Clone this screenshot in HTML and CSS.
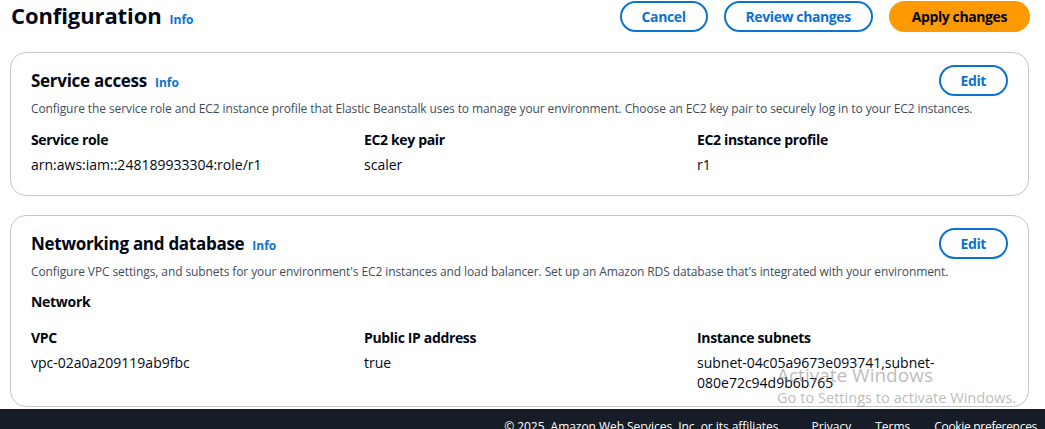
FILE: index.html
```html
<!DOCTYPE html>
<html lang="en">
<head>
<meta charset="utf-8">
<title>Configuration</title>
<link rel="stylesheet" href="styles.css">
</head>
<body>
<div class="page">
  <header class="top">
    <div class="title-wrap">
      <h1 class="title">Configuration</h1>
      <a class="info">Info</a>
    </div>
    <div class="actions">
      <button class="btn">Cancel</button>
      <button class="btn">Review changes</button>
      <button class="btn primary">Apply changes</button>
    </div>
  </header>

  <section class="card">
    <div class="card-head">
      <div class="card-title-row"><h2 class="card-title">Service access</h2><a class="info">Info</a></div>
      <button class="btn edit">Edit</button>
    </div>
    <p class="desc">Configure the service role and EC2 instance profile that Elastic Beanstalk uses to manage your environment. Choose an EC2 key pair to securely log in to your EC2 instances.</p>
    <div class="grid">
      <div class="field"><div class="label">Service role</div><div class="value">arn:aws:iam::248189933304:role/r1</div></div>
      <div class="field"><div class="label">EC2 key pair</div><div class="value">scaler</div></div>
      <div class="field"><div class="label">EC2 instance profile</div><div class="value">r1</div></div>
    </div>
  </section>

  <section class="card card-last">
    <div class="card-head">
      <div class="card-title-row"><h2 class="card-title">Networking and database</h2><a class="info">Info</a></div>
      <button class="btn edit">Edit</button>
    </div>
    <p class="desc">Configure VPC settings, and subnets for your environment's EC2 instances and load balancer. Set up an Amazon RDS database that's integrated with your environment.</p>
    <h3 class="sub">Network</h3>
    <div class="grid grid-net">
      <div class="field"><div class="label">VPC</div><div class="value">vpc-02a0a209119ab9fbc</div></div>
      <div class="field"><div class="label">Public IP address</div><div class="value">true</div></div>
      <div class="field"><div class="label">Instance subnets</div><div class="value">subnet-04c05a9673e093741,subnet-080e72c94d9b6b765</div></div>
    </div>
  </section>
</div>

<footer class="footer">
  <span class="copy">© 2025, Amazon Web Services, Inc. or its affiliates.</span>
  <a class="flink privacy">Privacy</a>
  <a class="flink">Terms</a>
  <a class="flink cookie">Cookie preferences</a>
</footer>

<div class="watermark">
  <div class="wm1">Activate Windows</div>
  <div class="wm2">Go to Settings to activate Windows.</div>
</div>
</body>
</html>
```

FILE: styles.css
```css
* { box-sizing: border-box; }
html, body { margin: 0; padding: 0; }
body {
  font-family: "Open Sans", "Noto Sans", sans-serif;
  color: #000716;
  background: #fff;
  width: 1045px;
  height: 429px;
  overflow: hidden;
  position: relative;
}
.page {
  padding: 0 16px 0 10px;
}
.top {
  display: flex;
  justify-content: space-between;
  align-items: flex-start;
  height: 52px;
}
.title-wrap {
  display: flex;
  align-items: baseline;
  gap: 8px;
  padding-left: 1px;
}
.title {
  margin: 0;
  font-size: 22px;
  font-weight: 700;
  line-height: 30px;
  letter-spacing: -0.1px;
}
.info {
  color: #0972d3;
  font-size: 12px;
  font-weight: 700;
}
.actions {
  display: flex;
  gap: 16px;
  margin-right: -1px;
}
.btn {
  font-family: inherit;
  font-size: 14px;
  font-weight: 700;
  letter-spacing: -0.4px;
  color: #0972d3;
  background: #fff;
  border: 2px solid #0972d3;
  border-radius: 20px;
  height: 31px;
  padding: 0 20px;
  margin-top: 1px;
  cursor: pointer;
}
.primary {
  background: #ff9900;
  border-color: #ff9900;
  color: #000716;
  padding: 0 21px;
}
.card {
  border: 1px solid #c6c6cd;
  border-radius: 16px;
  padding: 12px 20px 20px 20px;
  margin-bottom: 19px;
}
.card-last {
  padding-bottom: 13px;
}
.card-head {
  display: flex;
  justify-content: space-between;
  align-items: center;
  height: 31px;
}
.card-title-row {
  display: flex;
  align-items: baseline;
  gap: 8px;
}
.card-title {
  margin: 0;
  font-size: 17px;
  font-weight: 700;
  line-height: 24px;
  letter-spacing: -0.28px;
}
.desc {
  margin: 5px 0 0 0;
  font-size: 12px;
  line-height: 16px;
  color: #414d5c;
  letter-spacing: -0.1px;
  white-space: nowrap;
}
.edit {
  padding: 0 20px;
  margin: 0;
  flex: none;
}
.grid {
  display: grid;
  grid-template-columns: 333px 333px 1fr;
  margin-top: 13px;
}
.sub {
  margin: 12px 0 0 0;
  font-size: 14px;
  font-weight: 700;
  line-height: 20px;
  letter-spacing: -0.3px;
}
.grid-net { margin-top: 16px; }
.label {
  font-size: 14px;
  font-weight: 700;
  line-height: 20px;
  letter-spacing: -0.35px;
}
.value {
  font-size: 14px;
  line-height: 20px;
  margin-top: 5px;
}
.footer {
  position: absolute;
  left: 0;
  right: 0;
  top: 409px;
  height: 20px;
  background: #161d26;
  color: #fff;
  font-size: 12px;
  display: flex;
  justify-content: flex-end;
  align-items: flex-end;
  padding-right: 8px;
  line-height: 14px;
}
.copy, .flink { position: relative; top: 5px; }
.copy { letter-spacing: -0.05px; }
.flink { margin-left: 24px; }
.privacy { margin-left: 30px; }
.cookie { letter-spacing: -0.3px; }
.watermark {
  position: absolute;
  left: 777px;
  top: 363px;
  color: rgba(120,120,120,0.5);
  pointer-events: none;
}
.wm1 { font-size: 19px; line-height: 24px; }
.wm2 { font-size: 14.6px; line-height: 20px; }
```
